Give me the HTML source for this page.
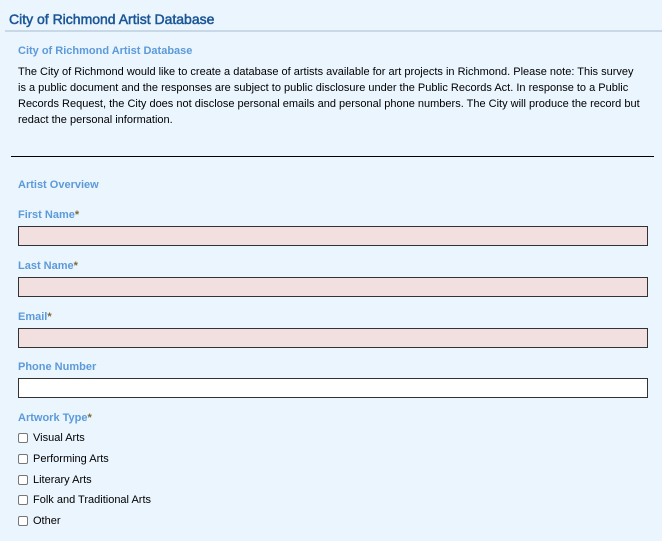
<!DOCTYPE html>
<html><head><meta charset="utf-8"><style>
*{margin:0;padding:0;box-sizing:border-box}
body{width:662px;height:541px;background:#ebf5fe;font-family:"Liberation Sans",Arial,sans-serif;font-size:11px;color:#000;position:relative;overflow:hidden}
.a{position:absolute}
h1{position:absolute;left:9px;top:11px;font-size:14px;font-weight:normal;color:#1b5696;-webkit-text-stroke:0.5px #1b5696}
.hr{left:5px;top:30px;width:657px;height:2px;background:#c8d8e6}
.lab{position:absolute;left:18px;font-size:11px;font-weight:bold;color:#5c9ad9}
.lab b{color:#7a6a3a}
.inp{position:absolute;left:18px;width:630px;height:20px;border:1px solid #333;background:#f2dfdf}
.cb{position:absolute;left:18px;width:10px;height:10px;border:1px solid #777;background:#fff;border-radius:2px}
.ct{position:absolute;left:33px;font-size:11px}
p{position:absolute;left:18px;top:64px;width:625px;line-height:16px;font-size:11px}
</style></head><body>
<h1>City of Richmond Artist Database</h1>
<div class="a hr"></div>
<div class="lab" style="top:45px">City of Richmond Artist Database</div>
<p>The City of Richmond would like to create a database of artists available for art projects in Richmond. Please note: This survey is a public document and the responses are subject to public disclosure under the Public Records Act. In response to a Public Records Request, the City does not disclose personal emails and personal phone numbers. The City will produce the record but redact the personal information.</p>
<div class="a" style="left:11px;top:156px;width:643px;height:1px;background:#000"></div>
<div class="lab" style="top:179px">Artist Overview</div>
<div class="lab" style="top:209px">First Name<b>*</b></div>
<div class="inp" style="top:226px"></div>
<div class="lab" style="top:260px">Last Name<b>*</b></div>
<div class="inp" style="top:277px"></div>
<div class="lab" style="top:311px">Email<b>*</b></div>
<div class="inp" style="top:328px"></div>
<div class="lab" style="top:361px">Phone Number</div>
<div class="inp" style="top:378px;background:#fff"></div>
<div class="lab" style="top:412px">Artwork Type<b>*</b></div>
<div class="cb" style="top:433px"></div><div class="ct" style="top:432px">Visual Arts</div>
<div class="cb" style="top:454px"></div><div class="ct" style="top:453px">Performing Arts</div>
<div class="cb" style="top:475px"></div><div class="ct" style="top:474px">Literary Arts</div>
<div class="cb" style="top:495px"></div><div class="ct" style="top:494px">Folk and Traditional Arts</div>
<div class="cb" style="top:516px"></div><div class="ct" style="top:515px">Other</div>
</body></html>
